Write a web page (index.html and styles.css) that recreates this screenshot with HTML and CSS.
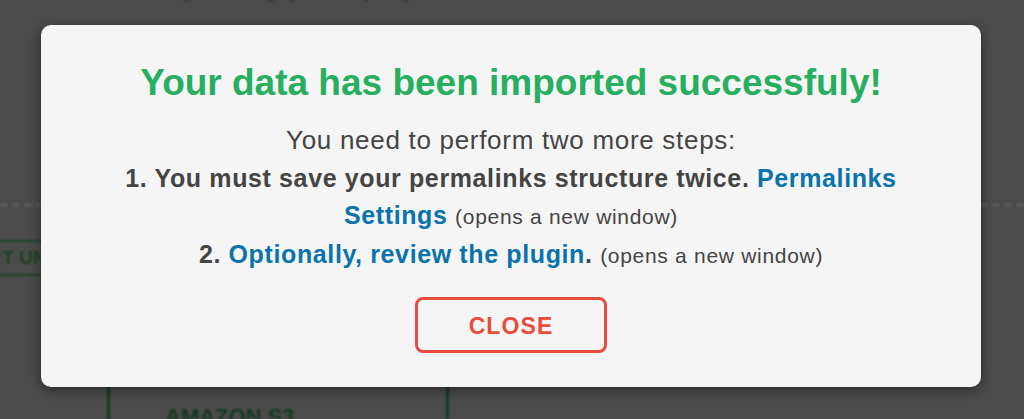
FILE: index.html
```html
<!DOCTYPE html>
<html>
<head>
<meta charset="utf-8">
<link rel="stylesheet" href="styles.css">
</head>
<body>
<div class="page">
  <div class="page-title">Migrating your page</div>
  <div class="page-dash"></div>
  <div class="page-row">
    <div class="ghost-btn">IMPORT UNITS</div>
  </div>
  <div class="page-rule"></div>
  <div class="page-cards">
    <div class="ghost-card">AMAZON S3</div>
  </div>
</div>
<div class="overlay">
  <div class="modal">
    <h1 class="modal-title">Your data has been imported successfuly!</h1>
    <div class="modal-body">
      <p class="line intro">You need to perform two more steps:</p>
      <p class="line"><b>1. You must save your permalinks structure twice.</b> <a class="link" href="#">Permalinks Settings</a> <span class="note">(opens a new window)</span></p>
      <p class="line"><b>2. <a class="link" href="#">Optionally, review the plugin</a>.</b> <span class="note">(opens a new window)</span></p>
    </div>
    <div class="actions">
      <button class="close-btn">CLOSE</button>
    </div>
  </div>
</div>
</body>
</html>
```
FILE: styles.css
```css
* { box-sizing: border-box; }
html, body { margin: 0; padding: 0; }
body {
  width: 1024px;
  height: 419px;
  overflow: hidden;
  background: #4b4b4b;
  font-family: "Liberation Sans", Arial, sans-serif;
  position: relative;
}
.page {
  height: 419px;
  overflow: hidden;
  display: flex;
  flex-direction: column;
  filter: blur(1px);
}
.page-title {
  height: 0;
  margin-left: 145px;
  font-size: 30px;
  font-weight: bold;
  color: #262626;
  line-height: 0;
  transform: translateY(-15px);
}
.page-dash {
  margin-top: 203px;
  height: 0;
  border-top: 4px dashed #575757;
}
.page-row {
  margin-top: 33px;
  display: flex;
}
.ghost-btn {
  margin-left: -72px;
  border-top: 2px solid #1d3f23;
  border-bottom: 2px solid #1d3f23;
  color: #1d3f23;
  font-weight: bold;
  font-size: 19px;
  padding: 0 12px;
  width: 220px;
  height: 36px;
  line-height: 32px;
  white-space: nowrap;
}
.page-rule {
  margin-top: 64px;
  height: 1px;
  background: #5e5e5e;
}
.page-cards {
  display: flex;
  padding-left: 107px;
}
.ghost-card {
  width: 342px;
  height: 120px;
  margin-top: 20px;
  border-left: 3px solid #143820;
  border-right: 3px solid #143820;
  color: #143820;
  font-weight: bold;
  font-size: 22px;
  padding: 44px 0 0 55px;
}
.overlay {
  position: absolute;
  inset: 0;
}
.modal {
  position: absolute;
  left: 41px;
  top: 25px;
  width: 940px;
  height: 362px;
  background: #f5f5f5;
  border-radius: 10px;
  box-shadow: 0 3px 12px rgba(0, 0, 0, 0.45);
  display: flex;
  flex-direction: column;
  align-items: center;
  padding: 36px 40px 0;
}
.modal-title {
  margin: 0;
  font-size: 37px;
  line-height: 44px;
  font-weight: bold;
  color: #27ae5f;
  text-align: center;
  white-space: nowrap;
}
.modal-body {
  margin-top: 17px;
  width: 820px;
  text-align: center;
  color: #444444;
  font-size: 25px;
  line-height: 37.5px;
  letter-spacing: 0.62px;
}
.line { margin: 0; }
.intro {
  font-size: 26px;
  letter-spacing: 0.7px;
}
.line b { font-weight: bold; }
.link {
  color: #0a73aa;
  font-weight: bold;
  text-decoration: none;
}
.note {
  font-size: 21px;
  letter-spacing: 0.7px;
}
.actions {
  margin-top: 23px;
  display: flex;
  justify-content: center;
}
.close-btn {
  width: 192px;
  height: 56px;
  border: 3px solid #e74c3c;
  border-radius: 8px;
  background: transparent;
  color: #e74c3c;
  font-family: "Liberation Sans", Arial, sans-serif;
  font-weight: bold;
  font-size: 23px;
  letter-spacing: 1.1px;
  padding: 3px 0 0;
}
```
